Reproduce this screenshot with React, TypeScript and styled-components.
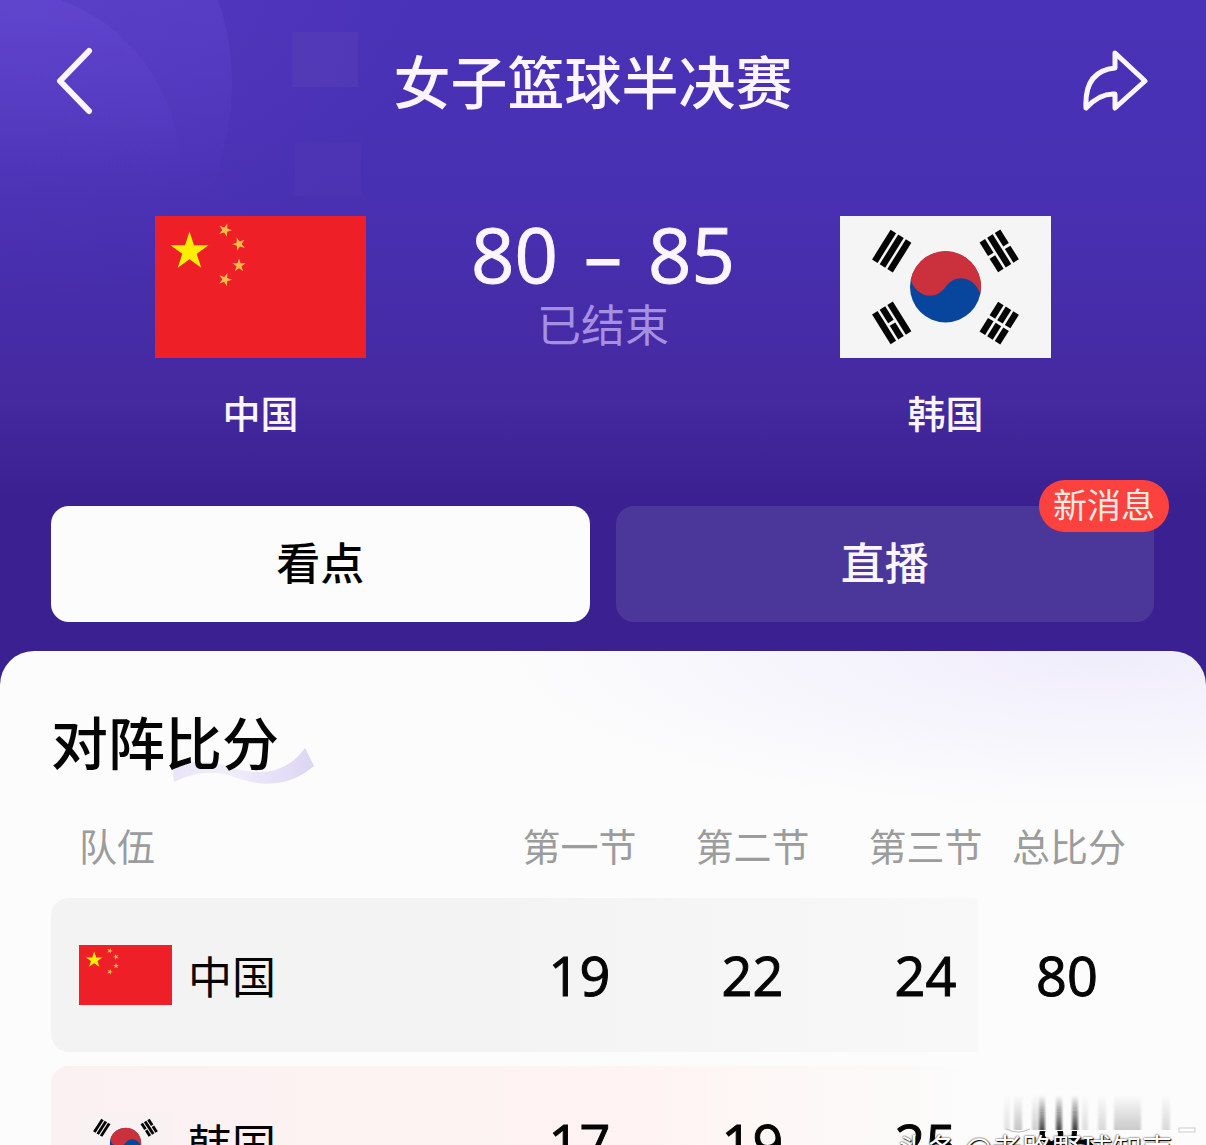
import React from "react";
import styled, { createGlobalStyle } from "styled-components";

const GlobalStyle = createGlobalStyle`
  *, *::before, *::after { box-sizing: border-box; }
  body { margin: 0; background: #fcfcfc; }
  button { font: inherit; color: inherit; border: 0; padding: 0; background: none; cursor: pointer; }
`;

const cjk = `"Noto Sans CJK SC", sans-serif`;
const digits = `"Open Sans", "Noto Sans CJK SC", sans-serif`;

const Screen = styled.div`
  position: relative;
  height: 100vh;
  overflow: hidden;
  display: flex;
  flex-direction: column;
  font-family: ${cjk};
  color: #fbf5ff;
  background:
    radial-gradient(ellipse 420px 300px at 0 0, #6c4fd444, transparent),
    linear-gradient(#4a32b8 0, #4830b2 200px, #44299f 400px, #3a2090 500px, #3a2090 100%);
`;

const Backdrop = styled.svg`
  position: absolute;
  top: 0;
  left: 0;
`;

const Header = styled.header`
  position: relative;
  flex: none;
  display: flex;
  align-items: center;
  justify-content: space-between;
  height: 162px;
  padding: 0 58px 0 56px;
`;

const IconButton = styled.button<{ $width: number }>`
  display: flex;
  width: ${(p) => p.$width}px;
  height: 68px;
`;

const Title = styled.h1`
  margin: 0;
  padding-bottom: 4px;
  font-size: 57px;
  line-height: 80px;
  font-weight: 500;
`;

const Match = styled.section`
  position: relative;
  flex: none;
  display: flex;
  justify-content: space-between;
  padding: 54px 155px 0;
`;

const Team = styled.div`
  display: flex;
  flex-direction: column;
  align-items: center;
  gap: 26px;
  font-size: 38px;
  line-height: 56px;
  font-weight: 500;
  svg { display: block; width: 211px; height: 142px; }
`;

const Result = styled.div`
  display: flex;
  flex-direction: column;
  align-items: center;
`;

const Score = styled.div`
  display: flex;
  gap: 26px;
  font-family: ${digits};
  font-size: 76px;
  line-height: 76px;
  font-weight: 500;
  -webkit-text-stroke: 1px currentColor;
`;

const Status = styled.div`
  font-size: 44px;
  line-height: 62px;
  color: #a58fe2;
`;

const Tabs = styled.nav`
  position: relative;
  flex: none;
  display: grid;
  grid-template-columns: 1fr 1fr;
  gap: 26px;
  padding: 66px 52px 29px 51px;
`;

const Tab = styled.button<{ $active?: boolean }>`
  position: relative;
  height: 116px;
  padding-bottom: 6px;
  border-radius: 18px;
  font-size: 44px;
  line-height: 60px;
  font-weight: 500;
  background: ${(p) => (p.$active ? "#fcfcfd" : "#4b3799")};
  color: ${(p) => (p.$active ? "#000" : "#fbf5ff")};
`;

const Badge = styled.span`
  position: absolute;
  top: -26px;
  right: -15px;
  padding: 0 14px 4px;
  border-radius: 26px;
  background: #fb423f;
  color: #ffe9e2;
  font-size: 34px;
  line-height: 48px;
  font-weight: 400;
`;

const Panel = styled.main`
  position: relative;
  flex: 1 0 auto;
  padding: 49px 52px 0 51px;
  border-radius: 34px 34px 0 0;
  color: #050505;
  background:
    radial-gradient(ellipse 620px 160px at 92% 0, #f0edfc, #f0edfc00),
    #fcfcfc;
`;

const Heading = styled.h2`
  position: relative;
  width: max-content;
  margin: 0 0 24px;
  font-size: 57px;
  line-height: 80px;
  font-weight: 500;
`;

const Swoosh = styled.svg`
  position: absolute;
  left: 120px;
  top: 44px;
`;

const HeadingText = styled.span`
  position: relative;
`;

const Table = styled.table`
  display: block;
`;

const Head = styled.thead`
  display: block;
`;

const Body = styled.tbody`
  display: grid;
  gap: 14px;
`;

const Row = styled.tr<{ $tone?: "grey" | "pink" }>`
  display: grid;
  grid-template-columns: 1fr 173px 173px 173px 142px;
  align-items: center;
  height: ${(p) => (p.$tone ? 154 : 94)}px;
  border-radius: 18px;
  background: ${(p) =>
    p.$tone === "grey"
      ? "linear-gradient(90deg, #f3f3f3 40%, #f8f8f8 84%, transparent 84%)"
      : p.$tone === "pink"
      ? "linear-gradient(90deg, #fbf1f2 0, #fff4f3 55%, #fdf7f6 64%, #fbfaf9 78%, #fcfcfc 84%)"
      : "none"};
`;

const ColumnHead = styled.th`
  padding: 0 0 12px;
  font-size: 38px;
  line-height: 54px;
  font-weight: 400;
  color: #9c9c9c;
  white-space: nowrap;
  &:first-child { text-align: left; padding-left: 28px; }
  &:last-child { padding-right: 32px; }
`;

const TeamCell = styled.th`
  display: flex;
  align-items: center;
  gap: 16px;
  padding: 0 0 0 28px;
  font-size: 44px;
  line-height: 60px;
  font-weight: 400;
  svg { display: block; width: 93px; height: 60px; }
`;

const Points = styled.td`
  padding: 0;
  text-align: center;
  font-family: ${digits};
  font-size: 54px;
  line-height: 60px;
  font-weight: 500;
  -webkit-text-stroke: 1px currentColor;
  &:last-child { padding-right: 32px; }
`;

const Smear = styled.svg`
  position: absolute;
  right: 6px;
  top: 1092px;
`;

const Watermark = styled.div`
  position: absolute;
  left: 897px;
  top: 1126px;
  font-size: 30px;
  line-height: 42px;
  color: #fff;
  white-space: nowrap;
  text-shadow: 0 0 2px #000, 1px 1px 1px #000;
`;

const star = (cx: number, cy: number, r: number, turn = 0) =>
  Array.from({ length: 10 }, (_, i) => {
    const radius = i % 2 ? r * 0.382 : r;
    const a = ((i * 36 - 90 + turn) * Math.PI) / 180;
    return `${(cx + radius * Math.cos(a)).toFixed(2)},${(cy + radius * Math.sin(a)).toFixed(2)}`;
  }).join(" ");

const ChinaFlag = () => (
  <svg viewBox="0 0 211 142" preserveAspectRatio="none" aria-hidden="true">
    <rect width="211" height="142" fill="#ee1f26" />
    <polygon points={star(34.5, 35.5, 20)} fill="#ffee00" />
    <g fill="#fdbb4c">
      <polygon points={star(70, 14, 7, 20)} />
      <polygon points={star(84, 28, 7, -20)} />
      <polygon points={star(84, 49.5, 7)} />
      <polygon points={star(70, 63.5, 7, 20)} />
    </g>
  </svg>
);

type TrigramProps = { x: number; y: number; turn: number; bars: boolean[] };

const Trigram = ({ x, y, turn, bars }: TrigramProps) => (
  <g transform={`translate(${x} ${y}) rotate(${turn})`} fill="#050505">
    {bars.map((whole, i) => {
      const left = -12 + i * 9;
      return whole ? (
        <rect key={i} x={left} y={-17.5} width={6.5} height={35} />
      ) : (
        <React.Fragment key={i}>
          <rect x={left} y={-17.5} width={6.5} height={16} />
          <rect x={left} y={1.5} width={6.5} height={16} />
        </React.Fragment>
      );
    })}
  </g>
);

const KoreaFlag = ({ ground = "#f5f5f5" }: { ground?: string }) => (
  <svg viewBox="0 0 211 142" preserveAspectRatio="none" aria-hidden="true">
    <rect width="211" height="142" fill={ground} />
    <g transform="translate(105.5 71)">
      <circle r="35.5" fill="#07469c" />
      <path
        d="M-34.8 -7C-28 12 -9 13 0 0C9 -13 28 -12 34.8 7A35.5 35.5 0 1 0 -34.8 -7Z"
        fill="#cb313c"
      />
    </g>
    <Trigram x={51.5} y={35} turn={32} bars={[true, true, true]} />
    <Trigram x={159} y={35} turn={-32} bars={[false, true, false]} />
    <Trigram x={51.5} y={107} turn={-32} bars={[true, false, true]} />
    <Trigram x={159} y={107} turn={32} bars={[false, false, false]} />
  </svg>
);

const columns = ["队伍", "第一节", "第二节", "第三节", "总比分"];

const smearBars = [
  [4, 6, 0.1], [14, 8, 0.22], [32, 6, 0.18], [39, 6, 0.75], [56, 6, 0.75], [72, 6, 0.8],
  [82, 6, 0.12], [98, 8, 0.14], [114, 27, 0.2], [162, 8, 0.14],
];

export default function App() {
  return (
    <Screen>
      <GlobalStyle />
      <Backdrop width="600" height="300" aria-hidden="true">
        <defs>
          <linearGradient id="halo" x2="0" y2="1">
            <stop offset="0" stopColor="#6a4ed8" />
            <stop offset="1" stopColor="#6a4ed8" stopOpacity="0" />
          </linearGradient>
        </defs>
        <path d="M0 0H218Q250 90 208 200H0Z" fill="url(#halo)" opacity=".3" />
        <path d="M0 0H60A180 180 0 0 1 180 170H0Z" fill="url(#halo)" opacity=".35" />
        <rect x="292" y="32" width="66" height="55" fill="#5b43b4" opacity=".4" />
        <rect x="295" y="142" width="66" height="54" fill="#553cb4" opacity=".3" />
      </Backdrop>
      <Header>
        <IconButton type="button" aria-label="返回" $width={48}>
          <svg width="40" height="68" fill="none" stroke="#fbf5ff" strokeWidth="6" strokeLinecap="round" strokeLinejoin="round">
            <path d="M33 4 4 34 33 64" />
          </svg>
        </IconButton>
        <Title>女子篮球半决赛</Title>
        <IconButton type="button" aria-label="分享" $width={66}>
          <svg width="66" height="68" fill="none" stroke="#fbf5ff" strokeWidth="5" strokeLinecap="round" strokeLinejoin="round">
            <path d="M33 6 63 34 33 61V47Q18 46 4 61Q2 24 33 21Z" />
          </svg>
        </IconButton>
      </Header>
      <Match>
        <Team>
          <ChinaFlag />
          <span>中国</span>
        </Team>
        <Result>
          <Score>
            <span>80</span>
            <span>–</span>
            <span>85</span>
          </Score>
          <Status>已结束</Status>
        </Result>
        <Team>
          <KoreaFlag />
          <span>韩国</span>
        </Team>
      </Match>
      <Tabs>
        <Tab type="button" $active>看点</Tab>
        <Tab type="button">
          直播
          <Badge>新消息</Badge>
        </Tab>
      </Tabs>
      <Panel>
        <Heading>
          <Swoosh width="146" height="44" aria-hidden="true">
            <defs>
              <linearGradient id="swoosh">
                <stop offset="0" stopColor="#e9e4f8" />
                <stop offset=".4" stopColor="#f1eefb" />
                <stop offset="1" stopColor="#dcd5f3" />
              </linearGradient>
            </defs>
            <path d="M1 22Q32 12 62 24Q110 38 134 4L143 22Q108 52 58 31Q30 24 3 38Z" fill="url(#swoosh)" />
          </Swoosh>
          <HeadingText>对阵比分</HeadingText>
        </Heading>
        <Table>
          <Head>
            <Row>
              {columns.map((name) => (
                <ColumnHead key={name} scope="col">{name}</ColumnHead>
              ))}
            </Row>
          </Head>
          <Body>
            <Row $tone="grey">
              <TeamCell scope="row"><ChinaFlag />中国</TeamCell>
              <Points>19</Points>
              <Points>22</Points>
              <Points>24</Points>
              <Points>80</Points>
            </Row>
            <Row $tone="pink">
              <TeamCell scope="row"><KoreaFlag ground="#f8f2f3" />韩国</TeamCell>
              <Points>17</Points>
              <Points>19</Points>
              <Points>25</Points>
              <Points>85</Points>
            </Row>
          </Body>
        </Table>
      </Panel>
      <Smear width="200" height="42" aria-hidden="true">
        <defs>
          <linearGradient id="smear" x2="0" y2="1">
            <stop offset="0" stopColor="#111" stopOpacity="0" />
            <stop offset="1" stopColor="#111" />
          </linearGradient>
          <filter id="soften"><feGaussianBlur stdDeviation="1.2 0" /></filter>
        </defs>
        <rect width="180" height="38" y="1" fill="#fcfcfc" />
        <g filter="url(#soften)">
          {smearBars.map(([x, w, o]) => (
            <rect key={x} x={x} y="3" width={w} height="35" fill="url(#smear)" opacity={o} />
          ))}
        </g>
        <path d="M6 37Q18 43 30 37" fill="none" stroke="#bbb" />
        <rect x="179" y="36" width="16" height="4" fill="#fff" stroke="#ccc" />
      </Smear>
      <Watermark>头条 @老路野球知南</Watermark>
    </Screen>
  );
}
